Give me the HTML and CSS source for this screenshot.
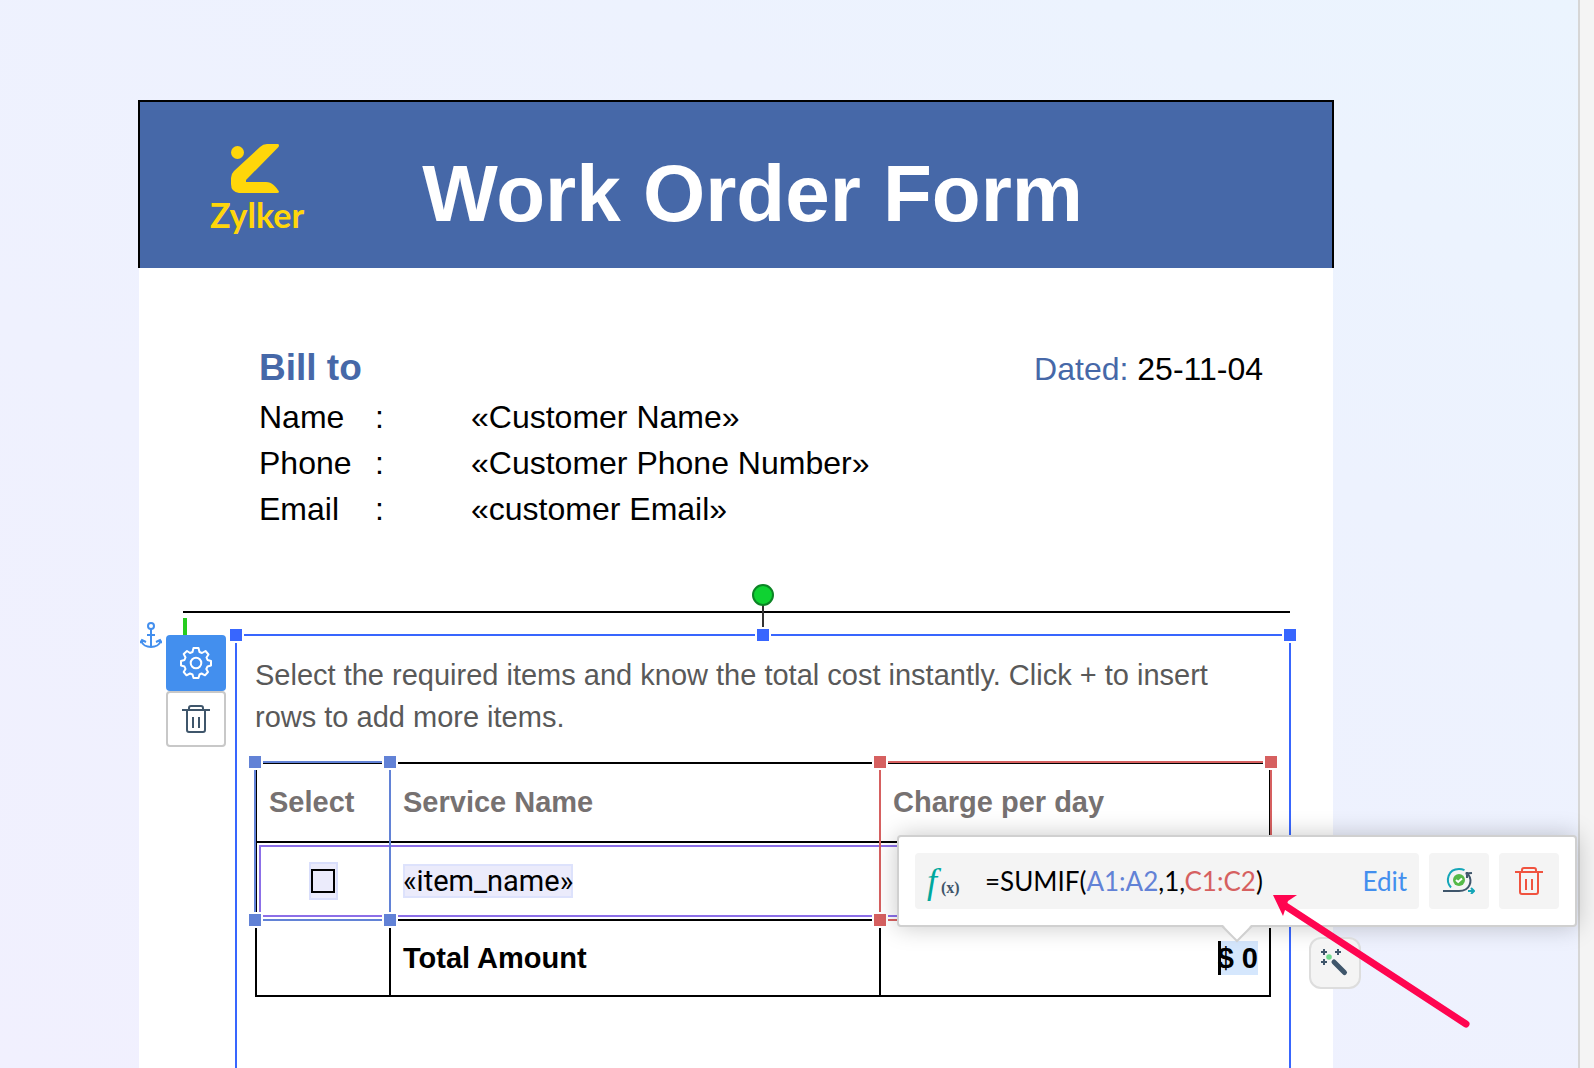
FILE: index.html
```html
<!DOCTYPE html>
<html lang="en">
<head>
<meta charset="utf-8">
<title>Work Order Form</title>
<link rel="stylesheet" href="styles.css">
</head>
<body>
<main class="canvas">
  <article class="paper">
    <header class="banner">
      <div class="logo">
        <svg class="logo-mark" width="48" height="50" viewBox="0 0 48 50" fill="#ffd60a" aria-hidden="true">
          <circle cx="6.500" cy="8.500" r="6.500"/>
          <path d="M36 0H47Q49 1 47 3.500L15 36V38H35C41 38 45 43 48 47.500Q48 49 46 49H8Q0 48 0 40V34Q0 30 3 27L29 3Q32 0 36 0Z"/>
        </svg>
        <span class="logo-name">Zylker</span>
      </div>
      <h1 class="title">Work Order Form</h1>
    </header>

    <section class="billing">
      <div class="billing-head">
        <h2 class="bill-to">Bill to</h2>
        <p class="dated"><span class="dated-label">Dated:</span> 25-11-04</p>
      </div>
      <dl class="fields">
        <dt>Name</dt><dd>:</dd><dd>«Customer Name»</dd>
        <dt>Phone</dt><dd>:</dd><dd>«Customer Phone Number»</dd>
        <dt>Email</dt><dd>:</dd><dd>«customer Email»</dd>
      </dl>
    </section>

    <hr class="rule">

    <section class="frame">
      <span class="text-caret"></span>
      <span class="rotate-stem"></span>
      <span class="rotate-dot"></span>
      <span class="grip grip-left"></span>
      <span class="grip grip-mid"></span>
      <span class="grip grip-right"></span>

      <svg class="anchor" width="22" height="26" viewBox="0 0 22 26" fill="none" stroke="#438fee" stroke-width="2" aria-hidden="true">
        <circle cx="11" cy="4" r="3"/>
        <path d="M11 7V25M7 13H15M1.500 19C3 27 19 27 20.500 19M0 21L2 18L6 20M22 21L20 18L16 20"/>
      </svg>

      <div class="tools">
        <button class="tool tool-settings" type="button" aria-label="Settings">
          <svg width="32" height="32" viewBox="0 0 32 32" fill="none" stroke="#fff" stroke-width="2" stroke-linejoin="round" aria-hidden="true">
            <circle cx="16" cy="16" r="5.300"/>
            <path d="M13.500 1H18.500L19.500 5L22 6L25.500 4L28.500 7.500L26.500 10.500L27.500 13L31 14V18.500L27.500 19.500L26.300 22L28 25L25 28.300L21.500 26.500L19.500 27.500L18.500 31H13.500L12.500 27.500L10 26.500L6.500 28.300L3.700 25L5.500 22L4.500 19.500L1 18.500V14L4.500 13L5.500 10.500L3.700 7L7 4L10 6L12.500 5Z"/>
          </svg>
        </button>
        <button class="tool tool-delete" type="button" aria-label="Delete">
          <svg width="28" height="28" viewBox="0 0 28 28" fill="none" stroke="#3f566b" stroke-width="2" aria-hidden="true">
            <path d="M0 5H28M7 5V3Q7 1 9 1H19Q21 1 21 3V5M5 5V25Q5 27 7 27H21Q23 27 23 25V5M11 12V23M17 12V23"/>
          </svg>
        </button>
      </div>

      <p class="hint">Select the required items and know the total cost instantly. Click + to insert rows to add more items.</p>

      <div class="sheet">
        <table class="grid">
          <thead>
            <tr class="row-head"><th class="col-select" scope="col">Select</th><th class="col-service" scope="col">Service Name</th><th scope="col">Charge per day</th></tr>
          </thead>
          <tbody>
            <tr class="row-item">
              <td class="cell-check"><label class="check"><input type="checkbox" aria-label="Select item"></label></td>
              <td><span class="merge-field">«item_name»</span></td>
              <td></td>
            </tr>
            <tr class="row-total"><td></td><td>Total Amount</td><td class="cell-sum"><span class="sum">$ 0</span></td></tr>
          </tbody>
        </table>

        <div class="repeat-outline"></div>
        <div class="range range-a"><i class="nw"></i><i class="ne"></i><i class="sw"></i><i class="se"></i></div>
        <div class="range range-c"><i class="nw"></i><i class="ne"></i><i class="sw"></i><i class="se"></i></div>

        <div class="popup">
          <div class="formula">
            <span class="fx"><span class="fx-f">f</span><span class="fx-x">(x)</span></span>
            <code class="expr">=SUMIF(<span class="ref-a">A1:A2</span>,1,<span class="ref-c">C1:C2</span>)</code>
            <button class="edit" type="button">Edit</button>
          </div>
          <button class="action" type="button" aria-label="Recalculate">
            <svg width="32" height="26" viewBox="0 0 32 26" fill="none" aria-hidden="true">
              <circle cx="16" cy="12" r="6" fill="#55b947"/>
              <path d="M13 12L15.200 14L19 10.500" stroke="#fff" stroke-width="2"/>
              <path d="M8 19.500C2 13 5 1 16 1Q19 1 21.500 2.200" stroke="#14a6b8" stroke-width="2"/>
              <path d="M0 23H16C27 23 30 13 25 6" stroke="#3f566b" stroke-width="2"/>
              <path d="M22.500 5.500L29 5M24 4L24 10" stroke="#3f566b" stroke-width="2"/>
              <path d="M25 23H31M28 20L31 23L28 26" stroke="#14a6b8" stroke-width="2"/>
            </svg>
          </button>
          <button class="action" type="button" aria-label="Remove formula">
            <svg width="28" height="28" viewBox="0 0 28 28" fill="none" stroke="#f0533f" stroke-width="2" aria-hidden="true">
              <path d="M0 5H28M7 5V3Q7 1 9 1H19Q21 1 21 3V5M5 5V25Q5 27 7 27H21Q23 27 23 25V5M11 12V23M17 12V23"/>
            </svg>
          </button>
          <svg class="pointer" width="32" height="18" viewBox="0 0 32 18" aria-hidden="true">
            <path d="M2 0L16 15.500L30 0Z" fill="#fff"/>
            <path d="M0 1H1L16 16L31 1H32" fill="none" stroke="#d0d0d0" stroke-width="2"/>
          </svg>
        </div>

        <button class="wand" type="button" aria-label="Smart suggestions">
          <svg width="28" height="28" viewBox="0 0 28 28" fill="none" stroke="#3f566b" stroke-width="2" aria-hidden="true">
            <path d="M3 0V6M0 3H6M17 0V6M14 3H20M3 10V16M0 13H6"/>
            <circle cx="8" cy="8" r="2.800" fill="#6fdc8c" stroke="none"/>
            <path d="M13 13L23.500 23.500" stroke-width="5" stroke-linecap="round"/>
          </svg>
        </button>

        <svg class="callout" width="202" height="138" viewBox="0 0 202 138" aria-hidden="true">
          <path d="M14 13L196 132" stroke="#ff0550" stroke-width="7" stroke-linecap="round"/>
          <path d="M3 3H27L18 9L13 24Z" fill="#ff0550"/>
        </svg>
      </div>
    </section>
  </article>
</main>
<aside class="gutter"></aside>
</body>
</html>
```
FILE: styles.css
```css
* { box-sizing: border-box; }

body {
  margin: 0;
  min-height: 100vh;
  display: flex;
  overflow-x: hidden;
  font-family: "Liberation Sans", Arial, sans-serif;
  color: #000;
}

h1, h2, p, dl, dd { margin: 0; }
button { padding: 0; border: 0; font: inherit; }
svg { display: block; }

.canvas {
  flex: 1;
  display: flex;
  padding: 100px 245px 0 139px;
  background: linear-gradient(to bottom left, #ebf4fe, #edf2fe 30%, #f1f0fe);
}

.gutter {
  width: 16px;
  border-left: 2px solid #d6d6d6;
  background: #f4f4f4;
}

.paper {
  flex: 1;
  display: flex;
  flex-direction: column;
  background: #fff;
}

/* Banner */
.banner {
  display: flex;
  align-items: flex-start;
  gap: 118px;
  height: 168px;
  margin: 0 -1px;
  padding: 42px 70px 0;
  border: 2px solid #000;
  border-bottom: 0;
  background: #4668a8;
}

.logo { display: flex; flex-direction: column; }
.logo-mark { margin-left: 21px; }
.logo-name {
  font: 700 34px/42px Lato, sans-serif;
  color: #ffd60a;
}

.title {
  font-size: 80px;
  line-height: 100px;
  white-space: nowrap;
  color: #fff;
}

/* Billing details */
.billing {
  padding: 77px 70px 79px 120px;
  font-size: 32px;
  line-height: 46px;
}
.billing-head {
  display: flex;
  justify-content: space-between;
  align-items: baseline;
  height: 49px;
}
.bill-to { font-size: 37px; color: #4668a8; }
.dated-label { color: #4668a8; }
.fields { display: grid; grid-template-columns: 116px 96px 1fr; }

.rule {
  margin: 0 43px 21px 44px;
  border: 0;
  border-top: 2px solid #000;
}

/* Selected text frame */
.frame {
  position: relative;
  flex: 1;
  margin: 0 42px 0 96px;
  padding: 18px 18px 71px 18px;
  border: 2px solid #3866fe;
  border-bottom: 0;
}

.grip {
  position: absolute;
  top: -9px;
  width: 16px;
  height: 16px;
  border: 2px solid #fff;
  background: #3866fe;
}
.grip-left { left: -9px; }
.grip-mid { left: calc(50% - 8px); }
.grip-right { right: -9px; }

.rotate-dot {
  position: absolute;
  left: calc(50% - 11px);
  top: -52px;
  width: 22px;
  height: 22px;
  border: 2px solid #0c8425;
  border-radius: 50%;
  background: #0fd232;
}
.rotate-stem {
  position: absolute;
  left: calc(50% - 1px);
  top: -32px;
  width: 2px;
  height: 24px;
  background: #333;
}

.text-caret {
  position: absolute;
  left: -54px;
  top: -18px;
  width: 4px;
  height: 18px;
  background: #26cc1f;
}
.anchor { position: absolute; left: -97px; top: -14px; }

.tools {
  position: absolute;
  left: -71px;
  top: -1px;
  width: 60px;
}
.tool {
  display: flex;
  align-items: center;
  justify-content: center;
  width: 60px;
  height: 56px;
  border-radius: 4px;
}
.tool-settings { background: #438fee; }
.tool-delete { border: 2px solid #c8c8c8; background: #fff; }

.hint {
  margin-bottom: 24px;
  font-size: 29px;
  line-height: 42px;
  color: #595959;
}

/* Order table */
.sheet { position: relative; }
.grid {
  width: 100%;
  table-layout: fixed;
  border-collapse: collapse;
  font-size: 29px;
  line-height: 34px;
  font-weight: 700;
}
.grid th, .grid td {
  padding: 0 12px;
  border: 2px solid #000;
  text-align: left;
}
.grid th { padding-bottom: 2px; color: #767171; }
.col-select { width: 134px; }
.col-service { width: 490px; }
.row-head { height: 79px; }
.row-item { height: 78px; }
.row-total { height: 76px; }
.grid .cell-check { text-align: center; }
.grid .cell-sum { text-align: right; }

.check {
  display: inline-flex;
  align-items: center;
  justify-content: center;
  width: 29px;
  height: 38px;
  border: 2px solid #d9defb;
  background: #ebebfb;
  vertical-align: middle;
}
.check input {
  appearance: none;
  width: 24px;
  height: 24px;
  margin: 0;
  flex: none;
  border: 2px solid #000;
}
.merge-field {
  display: inline-block;
  background: #ebebfb;
  box-shadow: inset 0 0 0 2px #dde2fc;
  font: 400 29px/34px Roboto, sans-serif;
}
.sum {
  display: inline-block;
  margin-right: -1px;
  background: #d5e7fd;
  box-shadow: inset 3px 0 0 #000;
}

.repeat-outline {
  position: absolute;
  inset: 83px 3px auto 4px;
  height: 72px;
  border: 2px solid #8c6fe8;
}

/* Cell ranges referenced by the formula */
.range { position: absolute; top: -1px; height: 160px; border: 2px solid; }
.range-a { left: -1px; width: 137px; border-color: #6282d6; }
.range-c { left: 624px; right: -1px; border-color: #d66060; }
.range i {
  position: absolute;
  width: 16px;
  height: 16px;
  border: 2px solid #fff;
}
.range-a i { background: #6282d6; }
.range-c i { background: #d66060; }
.range .nw, .range .ne { top: -9px; }
.range .sw, .range .se { bottom: -9px; }
.range .nw, .range .sw { left: -9px; }
.range .ne, .range .se { right: -9px; }

/* Formula popup */
.popup {
  position: absolute;
  top: 73px;
  right: -306px;
  width: 680px;
  display: flex;
  gap: 10px;
  padding: 16px;
  border: 2px solid #d0d0d0;
  border-radius: 4px;
  background: #fff;
  box-shadow: 0 0 24px rgba(0, 0, 0, .22);
  font-family: Lato, sans-serif;
  font-size: 26px;
  line-height: 56px;
}
.formula {
  flex: 1;
  display: flex;
  height: 56px;
  padding: 0 12px;
  border-radius: 4px;
  background: #f4f4f4;
}
.fx {
  width: 58px;
  font-family: "Liberation Serif", serif;
  white-space: nowrap;
}
.fx-f { font-size: 36px; font-style: italic; color: #00a89d; }
.fx-x { margin-left: 4px; font-size: 16px; font-weight: 700; color: #3f566b; }
.expr { font-family: inherit; font-size: 26px; }
.ref-a { color: #6282d6; }
.ref-c { color: #d66060; }
.edit { margin-left: auto; background: none; color: #438fee; }
.action {
  display: flex;
  align-items: center;
  justify-content: center;
  width: 60px;
  height: 56px;
  border-radius: 4px;
  background: #f4f4f4;
}
.pointer { position: absolute; left: 322px; top: 88px; }

.wand {
  position: absolute;
  top: 175px;
  right: -90px;
  width: 52px;
  height: 52px;
  display: flex;
  align-items: center;
  justify-content: center;
  border: 2px solid #ddd;
  border-radius: 12px;
  background: #f4f4f4;
}

.callout { position: absolute; top: 130px; right: -201px; }
```
